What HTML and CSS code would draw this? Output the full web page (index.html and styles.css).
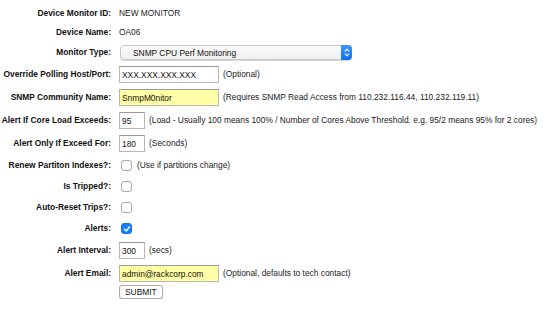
FILE: index.html
```html
<!DOCTYPE html>
<html lang="en">
<head>
  <meta charset="UTF-8">
  <title>Device Monitor</title>
  <link rel="stylesheet" href="styles.css">
</head>
<body>

  <form class="monitor-form" onsubmit="return false;">
    <div class="field-label">Device Monitor ID:</div>
    <div class="field-value">NEW MONITOR</div>

    <div class="field-label">Device Name:</div>
    <div class="field-value">OA06</div>

    <div class="field-label">Monitor Type:</div>
    <div class="field-value">
      <div class="select-wrap">
        <select class="type-select">
          <option>SNMP CPU Perf Monitoring</option>
        </select>
        <span class="select-arrow">
          <svg width="6" height="9" viewBox="0 0 6 9"><path d="M0.8 3.4 L3 1.2 L5.2 3.4 M0.8 5.6 L3 7.8 L5.2 5.6" fill="none" stroke="#fff" stroke-width="1.1"/></svg>
        </span>
      </div>
    </div>

    <div class="field-label">Override Polling Host/Port:</div>
    <div class="field-value">
      <input class="text-input" type="text" value="XXX.XXX.XXX.XXX">
      <span class="note">(Optional)</span>
    </div>

    <div class="field-label">SNMP Community Name:</div>
    <div class="field-value">
      <input class="text-input required" type="text" value="SnmpM0nitor">
      <span class="note">(Requires SNMP Read Access from 110.232.116.44, 110.232.119.11)</span>
    </div>

    <div class="field-label">Alert If Core Load Exceeds:</div>
    <div class="field-value">
      <input class="text-input short" type="text" value="95">
      <span class="note">(Load - Usually 100 means 100% / Number of Cores Above Threshold. e.g. 95/2 means 95% for 2 cores)</span>
    </div>

    <div class="field-label">Alert Only If Exceed For:</div>
    <div class="field-value">
      <input class="text-input short" type="text" value="180">
      <span class="note">(Seconds)</span>
    </div>

    <div class="field-label">Renew Partiton Indexes?:</div>
    <div class="field-value">
      <span class="check-box"></span>
      <span class="note check-note">(Use if partitions change)</span>
    </div>

    <div class="field-label">Is Tripped?:</div>
    <div class="field-value"><span class="check-box"></span></div>

    <div class="field-label">Auto-Reset Trips?:</div>
    <div class="field-value"><span class="check-box"></span></div>

    <div class="field-label">Alerts:</div>
    <div class="field-value">
      <span class="check-box checked">
        <svg width="8" height="8" viewBox="0 0 8 8"><path d="M1.6 4.3 L3.3 6 L6.4 1.8" fill="none" stroke="#fff" stroke-width="1.3" stroke-linecap="round" stroke-linejoin="round"/></svg>
      </span>
    </div>

    <div class="field-label">Alert Interval:</div>
    <div class="field-value">
      <input class="text-input short" type="text" value="300">
      <span class="note">(secs)</span>
    </div>

    <div class="field-label">Alert Email:</div>
    <div class="field-value">
      <input class="text-input required" type="text" value="admin@rackcorp.com">
      <span class="note">(Optional, defaults to tech contact)</span>
    </div>

    <div class="field-label"></div>
    <div class="field-value submit-row">
      <button class="submit-btn" type="submit">SUBMIT</button>
    </div>
  </form>

</body>
</html>
```

FILE: styles.css
```css
body {
  margin: 0;
  padding: 0;
  background: #fff;
  color: #222;
  font-family: "Liberation Sans", Arial, Helvetica, sans-serif;
  font-size: 8.4px;
  line-height: 13px;
}

.monitor-form {
  display: grid;
  grid-template-columns: 111px auto;
  column-gap: 8px;
  row-gap: 6px;
  padding-top: 7px;
  align-items: center;
}

.field-label {
  text-align: right;
  font-weight: bold;
  color: #111;
  white-space: nowrap;
}

.field-value {
  display: flex;
  align-items: center;
  gap: 4px;
  white-space: nowrap;
}

/* select box, mac style */
.select-wrap {
  position: relative;
  display: inline-flex;
  margin-left: 1px;
}

.type-select {
  appearance: none;
  -webkit-appearance: none;
  width: 232px;
  height: 15px;
  margin: 0;
  padding: 0 0 0 12px;
  border: 1px solid #c8c8c8;
  border-radius: 4px;
  background: linear-gradient(#fafafa, #f0f0f0);
  box-shadow: 0 1px 0 #d6d6d6;
  font-family: inherit;
  font-size: 8.4px;
  color: #111;
}

.select-arrow {
  position: absolute;
  top: 0;
  right: 0;
  width: 11px;
  height: 15px;
  display: flex;
  align-items: center;
  justify-content: center;
  background: linear-gradient(#3b95fb, #1170f5);
  border-radius: 0 4px 4px 0;
}

.text-input {
  width: 100px;
  height: 17px;
  box-sizing: border-box;
  margin: 0;
  padding: 0 2px;
  border: 1px solid #b8b8b8;
  border-top-color: #9a9a9a;
  background: #fff;
  font-family: inherit;
  font-size: 8.4px;
  color: #111;
}

.text-input.short {
  width: 26px;
}

.text-input.required {
  background: #ffffa6;
}

.note {
  color: #222;
}

.check-box {
  width: 11px;
  height: 11px;
  margin: 2px 0 2px 2px;
  border: 1px solid #a8a8a8;
  border-radius: 3px;
  background: #fff;
  display: inline-flex;
  align-items: center;
  justify-content: center;
  box-sizing: border-box;
}

.check-box.checked {
  background: #1a7ff7;
  border-color: #1670e0;
}

.check-note {
  margin-left: 1px;
}

.submit-row {
  margin-top: -3px;
}

.submit-btn {
  height: 14px;
  margin: 0;
  padding: 0 5px;
  border: 1px solid #aaa;
  border-radius: 3px;
  background: #fff;
  box-shadow: 0 1px 0 #d0d0d0;
  font-family: inherit;
  font-size: 8.4px;
  line-height: 12px;
  color: #111;
}
```
